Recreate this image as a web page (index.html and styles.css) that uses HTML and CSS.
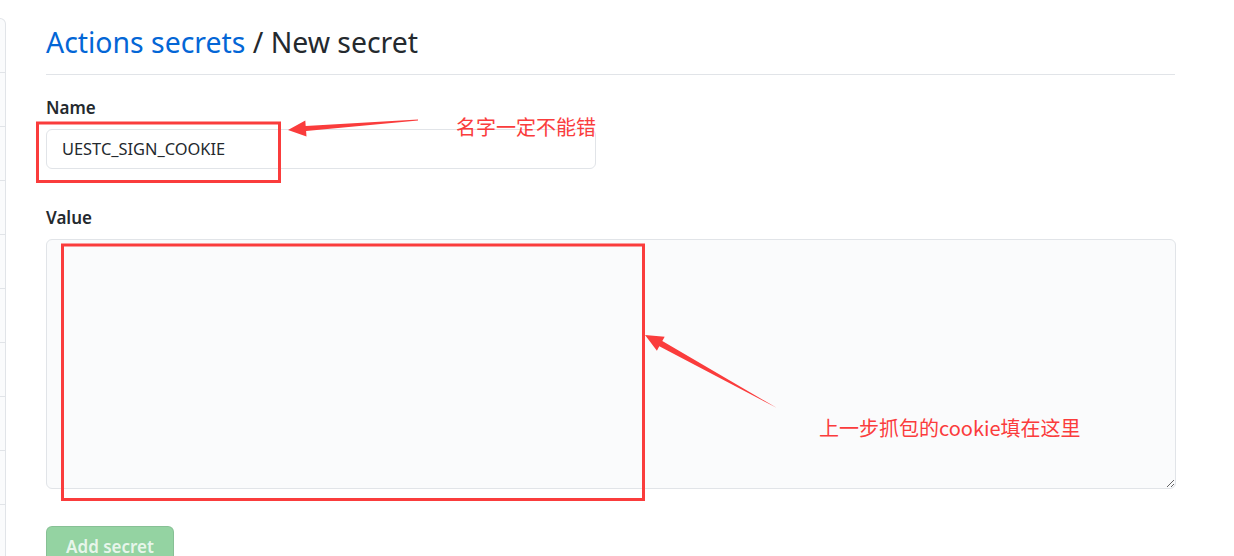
FILE: index.html
```html
<!DOCTYPE html>
<html lang="zh-CN">
<head>
<meta charset="utf-8">
<title>New secret</title>
<link rel="stylesheet" href="styles.css">
</head>
<body>
<div class="page">
  <nav class="sidebar">
    <div class="side-item"></div>
    <div class="side-item"></div>
    <div class="side-item"></div>
    <div class="side-item"></div>
    <div class="side-item"></div>
    <div class="side-item"></div>
    <div class="side-item"></div>
    <div class="side-item"></div>
    <div class="side-item"></div>
    <div class="side-item"></div>
  </nav>
  <main class="main">
    <div class="subhead">
      <h2 class="subhead-title"><a class="crumb" href="#">Actions secrets</a> / New secret</h2>
    </div>
    <form class="form">
      <div class="field">
        <label class="label">Name</label>
        <input class="input input-name" type="text" value="UESTC_SIGN_COOKIE">
      </div>
      <div class="field field-value">
        <label class="label">Value</label>
        <textarea class="input textarea"></textarea>
      </div>
      <button class="btn" type="button" disabled>Add secret</button>
    </form>
  </main>
</div>

<div class="annotations">
  <svg class="marks" width="1234" height="556" viewBox="0 0 1234 556">
    <rect x="37.5" y="123" width="242" height="58.5" fill="none" stroke="#fa3c3c" stroke-width="3"/>
    <rect x="62.5" y="245" width="581" height="254.5" fill="none" stroke="#fa3c3c" stroke-width="3"/>
    <polygon fill="#fa3c3c" points="288,130 305.3,120.6 305.7,126.1 418,119.5 418,120.6 306.1,131.1 306.5,136.6"/>
    <polygon fill="#fa3c3c" points="645,335 664.7,336.7 662.3,341.1 777,408 659.3,346.3 656.9,350.7"/>
  </svg>
  <span class="note note-name">名字一定不能错</span>
  <span class="note note-value">上一步抓包的cookie填在这里</span>
</div>
</body>
</html>
```

FILE: styles.css
```css
html, body {
  margin: 0;
  padding: 0;
  background: #ffffff;
}

body {
  font-family: "Noto Sans", "Open Sans", "Liberation Sans", sans-serif;
  color: #24292e;
  width: 1234px;
  height: 556px;
  overflow: hidden;
  position: relative;
}

.page {
  display: flex;
  align-items: flex-start;
}

.sidebar {
  width: 5px;
  margin-top: 18px;
  flex: none;
  background: #fafbfc;
  border: 1px solid #e1e4e8;
  border-left: none;
  border-top-right-radius: 6px;
  display: flex;
  flex-direction: column;
}

.side-item {
  height: 53px;
  border-bottom: 1px solid #e1e4e8;
}

.main {
  width: 1129px;
  margin-left: 40px;
  display: flex;
  flex-direction: column;
}

.subhead {
  height: 75px;
  padding-top: 25px;
  border-bottom: 1px solid #e1e4e8;
  display: flex;
  align-items: flex-start;
  box-sizing: border-box;
}

.subhead-title {
  margin: 0;
  font-size: 28.4px;
  font-weight: 400;
  color: #24292e;
  line-height: 34px;
}

.crumb {
  color: #0366d6;
  text-decoration: none;
}

.form {
  display: flex;
  flex-direction: column;
  padding-top: 21px;
}

.field {
  display: flex;
  flex-direction: column;
}

.field-value {
  margin-top: 37px;
}

.label {
  font-size: 17px;
  font-weight: 600;
  line-height: 24px;
  margin-bottom: 9px;
}

.input {
  box-sizing: border-box;
  border: 1px solid #e1e4e8;
  border-radius: 6px;
  background: #ffffff;
  font-family: "Noto Sans", "Open Sans", "Liberation Sans", sans-serif;
  color: #24292e;
  outline: none;
}

.input-name {
  width: 550px;
  height: 40px;
  padding: 0 15px 2px;
  font-size: 16.4px;
}

.textarea {
  width: 1130px;
  height: 250px;
  background: #fafbfc;
  resize: vertical;
  padding: 8px 15px;
}

.btn {
  margin-top: 37px;
  width: 128px;
  height: 42px;
  box-sizing: border-box;
  background: #94d3a2;
  border: 1px solid rgba(27, 31, 35, 0.1);
  border-radius: 6px;
  color: rgba(255, 255, 255, 0.8);
  font-family: "Noto Sans", "Open Sans", "Liberation Sans", sans-serif;
  font-size: 17px;
  font-weight: 600;
  padding: 0;
  line-height: 40px;
}

.annotations {
  position: absolute;
  inset: 0;
  pointer-events: none;
}

.marks {
  position: absolute;
  left: 0;
  top: 0;
}

.note {
  position: absolute;
  color: #fa3c3c;
  font-family: "Noto Sans CJK SC", "Noto Sans", sans-serif;
  font-size: 20px;
  line-height: 24px;
  white-space: nowrap;
}

.note-name {
  left: 456px;
  top: 115px;
}

.note-value {
  left: 819px;
  top: 416px;
}
```
